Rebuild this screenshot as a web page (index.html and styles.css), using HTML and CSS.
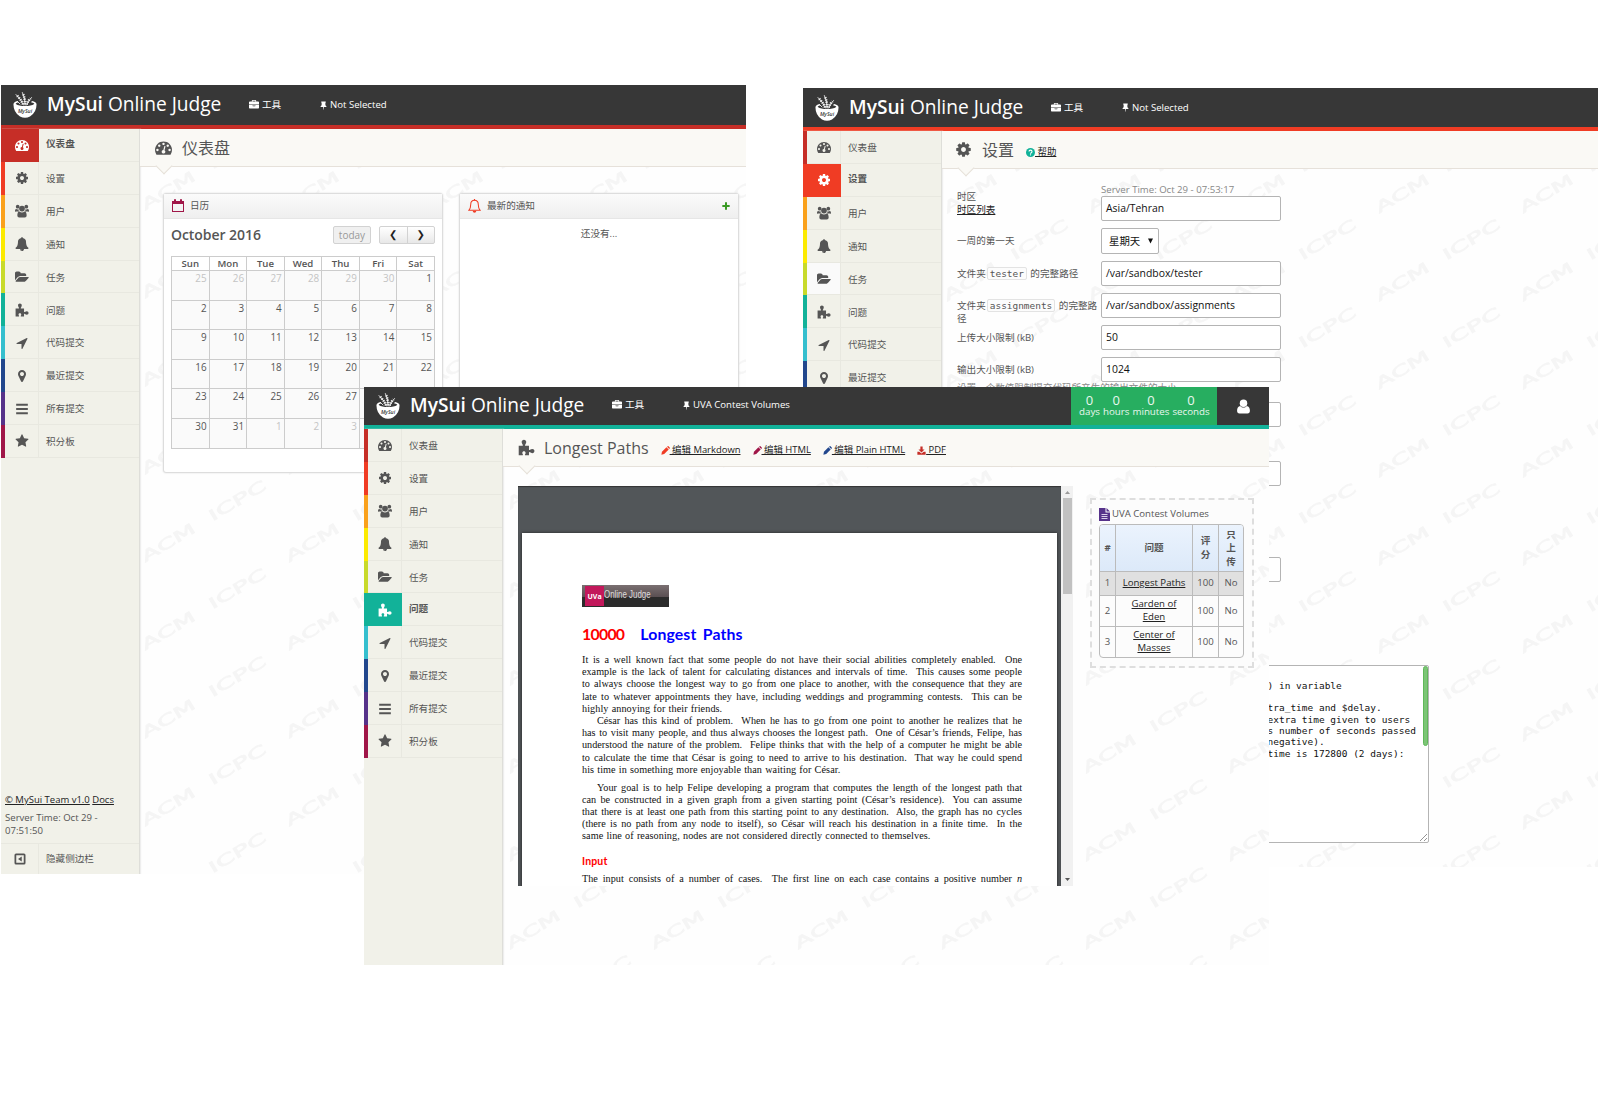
FILE: index.html
```html
<!DOCTYPE html>
<html lang="zh-CN">
<head>
<meta charset="utf-8">
<title>MySui Online Judge</title>
<link rel="stylesheet" href="styles.css">
</head>
<body>
<svg class="sprite" aria-hidden="true">
  <symbol id="dash" viewBox="0 0 1792 1792"><path d="M384 1152q0-53-37.5-90.5t-90.5-37.5-90.5 37.5-37.5 90.5 37.5 90.5 90.5 37.5 90.5-37.5 37.5-90.5zm192-448q0-53-37.5-90.5t-90.5-37.5-90.5 37.5-37.5 90.5 37.5 90.5 90.5 37.5 90.5-37.5 37.5-90.5zm428 481l101-382q6-26-7.5-48.5t-38.5-29.5-48 6.5-30 39.5l-101 382q-60 5-107 43.5t-63 98.5q-20 77 20 146t117 89 146-20 89-117q16-60-6-117t-72-91zm660-33q0-53-37.5-90.5t-90.5-37.5-90.5 37.5-37.5 90.5 37.5 90.5 90.5 37.5 90.5-37.5 37.5-90.5zm-640-640q0-53-37.5-90.5t-90.5-37.5-90.5 37.5-37.5 90.5 37.5 90.5 90.5 37.5 90.5-37.5 37.5-90.5zm448 192q0-53-37.5-90.5t-90.5-37.5-90.5 37.5-37.5 90.5 37.5 90.5 90.5 37.5 90.5-37.5 37.5-90.5zm320 448q0 261-141 483-19 29-54 29h-1402q-35 0-54-29-141-221-141-483 0-182 71-348t191-286 286-191 348-71 348 71 286 191 191 286 71 348z"/></symbol>
  <symbol id="cog" viewBox="0 0 1792 1792"><path d="M1152 896q0-106-75-181t-181-75-181 75-75 181 75 181 181 75 181-75 75-181zm512-109v222q0 12-8 23t-20 13l-185 28q-19 54-39 91 35 50 107 138 10 12 10 25t-9 23q-27 37-99 108t-94 71q-12 0-26-9l-138-108q-44 23-91 38-16 136-29 186-7 28-36 28h-222q-14 0-24.5-8.5t-11.5-21.5l-28-184q-49-16-90-37l-141 107q-10 9-25 9-14 0-25-11-126-114-165-168-7-10-7-23 0-12 8-23 15-21 51-66.5t54-70.5q-27-50-41-99l-183-27q-13-2-21-12.5t-8-23.5v-222q0-12 8-23t19-13l186-28q14-46 39-92-40-57-107-138-10-12-10-24 0-10 9-23 26-36 98.5-107.5t94.5-71.5q13 0 26 10l138 107q44-23 91-38 16-136 29-186 7-28 36-28h222q14 0 24.5 8.5t11.5 21.5l28 184q49 16 90 37l142-107q9-9 24-9 13 0 25 10 129 119 165 170 7 8 7 22 0 12-8 23-15 21-51 66.5t-54 70.5q26 50 41 98l183 28q13 2 21 12.5t8 23.5z"/></symbol>
  <symbol id="users" viewBox="0 0 24 24"><circle cx="4.6" cy="4.6" r="3.2"/><circle cx="19.4" cy="4.6" r="3.2"/><circle cx="12" cy="7.8" r="4.9"/><path d="M0 12.5C0 9.5.8 8.4 2 8.4c1 .9 3.400 1 4 .6 0 2 .5 3 1.300 4H1.800Q0 13.800 0 12.500zM24 12.500c0-3-.8-4.100-2-4.100-1 .9-3.400 1-4 .6 0 2-.5 3-1.300 4h5.500Q24 13.800 24 12.500zM4 19.800C4 15.500 5.200 12.800 7.600 12.800q2 1.700 4.400 1.700t4.400-1.700c2.400 0 3.600 2.700 3.600 7Q20 23 16.800 23H7.200Q4 23 4 19.800z"/></symbol>
  <symbol id="bell" viewBox="0 0 1792 1792"><path d="M912 1696q0-16-16-16-59 0-101.500-42.500t-42.500-101.500q0-16-16-16t-16 16q0 73 51.500 124.500t124.500 51.500q16 0 16-16zm816-288q0 52-38 90t-90 38h-448q0 106-75 181t-181 75-181-75-75-181h-448q-52 0-90-38t-38-90q50-42 91-88t85-119.500 74.500-158.500 50-206 19.500-260q0-152 117-282.500t307-158.500q-8-19-8-39 0-40 28-68t68-28 68 28 28 68q0 20-8 39 190 28 307 158.500t117 282.500q0 139 19.500 260t50 206 74.500 158.500 85 119.500 91 88z"/></symbol>
  <symbol id="folder" viewBox="0 0 1920 1792"><path d="M1879 952q0 31-31 66l-336 396q-43 51-120.500 86.500t-143.500 35.500h-1088q-34 0-60.500-13t-26.500-43q0-31 31-66l336-396q43-51 120.500-86.500t143.500-35.500h1088q34 0 60.500 13t26.500 43zm-343-344v160h-832q-94 0-197 47.500t-164 119.500l-337 396-5 6q0-4-.5-12.500t-.5-12.500v-960q0-92 66-158t158-66h320q92 0 158 66t66 158v32h544q92 0 158 66t66 158z"/></symbol>
  <symbol id="puzzle" viewBox="0 0 24 24"><path d="M1 9.500h5.400q.8-.3.300-1.500C5.800 6.500 5.200 5.600 5.200 4.200 5.200 2.300 6.600 1 8.400 1s3.200 1.300 3.200 3.200c0 1.400-.6 2.300-1.500 3.800-.5 1.200 0 1.500.8 1.500h4.600v5.200c.1 1 .8 1 1.500.6 1-.6 1.900-1.300 3.200-1.300 1.900 0 3 1.300 3 3s-1.100 3-3 3c-1.300 0-2.200-.7-3.200-1.300-.7-.4-1.400-.4-1.500.6V23h-4.800c-.8 0-1.200-.5-.8-1.200.5-.9.8-1.300.8-2.200 0-1.400-1-2.200-2.300-2.200s-2.300.8-2.300 2.200c0 .9.300 1.300.8 2.200.4.7 0 1.200-.8 1.200H1z"/></symbol>
  <symbol id="arrow" viewBox="0 0 1792 1792"><path d="M1593 349l-640 1280q-17 35-57 35-5 0-15-2-22-5-35.500-22.500t-13.500-39.500v-576h-576q-22 0-39.500-13.500t-22.500-35.500 4-42 29-30l1280-640q13-7 29-7 27 0 45 19 15 14 18.500 34.500t-6.500 39.500z"/></symbol>
  <symbol id="pin" viewBox="0 0 1792 1792"><path d="M1152 640q0-106-75-181t-181-75-181 75-75 181 75 181 181 75 181-75 75-181zm256 0q0 109-33 179l-364 774q-16 33-47.500 52t-67.500 19-67.500-19-46.500-52l-365-774q-33-70-33-179 0-212 150-362t362-150 362 150 150 362z"/></symbol>
  <symbol id="bars" viewBox="0 0 24 24"><path d="M2 3.200h20v3.400H2zM2 10.300h20v3.400H2zM2 17.400h20v3.400H2z"/></symbol>
  <symbol id="star" viewBox="0 0 1792 1792"><path d="M1728 647q0 22-26 48l-363 354 86 500q1 7 1 20 0 21-10.500 35.500t-30.500 14.500q-19 0-40-12l-449-236-449 236q-22 12-40 12-21 0-31.500-14.500t-10.500-35.500q0-6 2-20l86-500-364-354q-25-27-25-48 0-37 56-46l502-73 225-455q19-41 49-41t49 41l225 455 502 73q56 9 56 46z"/></symbol>
  <symbol id="case" viewBox="0 0 1792 1792"><path d="M640 256h512v-128h-512v128zm1152 640v480q0 66-47 113t-113 47h-1472q-66 0-113-47t-47-113v-480h672v160q0 26 19 45t45 19h320q26 0 45-19t19-45v-160h672zm-768 0v128h-256v-128h256zm768-480v384h-1792v-384q0-66 47-113t113-47h352v-160q0-40 28-68t68-28h576q40 0 68 28t28 68v160h352q66 0 113 47t47 113z"/></symbol>
  <symbol id="tack" viewBox="0 0 16 24"><path d="M3 1h10q1.500 0 1.500 1.500T13 4v7q3 1.500 3 5H9.200L8.400 23h-.8L7 16H0q0-3.500 3-5V4Q1.500 4 1.500 2.500T3 1z"/></symbol>
  <symbol id="pencil" viewBox="0 0 24 24"><path d="M1 23l1.500-7.500L14.500 3.500l6 6L8.500 21.500zM16 2l2-1.500q1-.7 2 .3l3.200 3.200q1 1 .3 2L22 8z"/></symbol>
  <symbol id="download" viewBox="0 0 24 24"><path d="M9 1h6v8h5l-8 8-8-8h5zM1 15h5l6 5 6-5h5v8H1z"/></symbol>
  <symbol id="user" viewBox="0 0 24 28"><circle cx="12" cy="8" r="7"/><path d="M0 22c0-5 2-9 6-9 1.500 1.800 3.700 3 6 3s4.500-1.200 6-3c4 0 6 4 6 9 0 3-1.500 5-4.500 5h-15C1.500 27 0 25 0 22z"/></symbol>
  <symbol id="file" viewBox="0 0 22 26"><path d="M0 0h13v9h9v17H0zM15 0l7 7h-7z"/><path class="cut" d="M5 12h12v2H5zM5 16h12v2H5zM5 20h12v1.800H5z"/></symbol>
  <symbol id="bowl" viewBox="0 0 24 26">
    <path d="M.5 12Q.8 9.800 4.500 9l1 1.200Q2.300 11 2.800 12q3 2 9.200 2t9.200-2q.5-1-3.200-1.800l1-1.200q4.200.8 4.500 3 .3 8-6.500 12.500-5 2.400-10 0Q.2 20 .5 12z"/>
    <g fill="none" stroke="currentColor" stroke-linecap="round">
      <path stroke-width="2.600" stroke-dasharray="1.300 1" stroke-linecap="butt" d="M10 12.500Q8 7.500 4 3.600M12 12.500Q12 6 9.800 1.200M13.500 12.500Q14.500 9.500 17.500 6.500" opacity=".85"/>
      <path stroke-width=".8" d="M10.500 13Q8 7 3 2.500M12.200 13Q12 5 9.400 0.500M13.800 13Q15 9 18.500 5.500M7 12L4.500 9.500"/>
    </g>
    <text x="12" y="20.500" text-anchor="middle">MySui</text>
  </symbol>
</svg>

<section class="win w1">
  <header class="top">
    <svg class="logo"><use href="#bowl"/></svg><h1><b>MySui</b> Online Judge</h1>
    <span class="tools"><svg><use href="#case"/></svg>工具</span>
    <span class="sel"><svg><use href="#tack"/></svg>Not Selected</span>
  </header>
  <div class="body">
    <nav class="side">
      <a class="c1 on"><i><svg><use href="#dash"/></svg></i><span>仪表盘</span></a>
      <a class="c2"><i><svg><use href="#cog"/></svg></i><span>设置</span></a>
      <a class="c3"><i><svg><use href="#users"/></svg></i><span>用户</span></a>
      <a class="c4"><i><svg><use href="#bell"/></svg></i><span>通知</span></a>
      <a class="c5"><i><svg><use href="#folder"/></svg></i><span>任务</span></a>
      <a class="c6"><i><svg><use href="#puzzle"/></svg></i><span>问题</span></a>
      <a class="c7"><i><svg><use href="#arrow"/></svg></i><span>代码提交</span></a>
      <a class="c8"><i><svg><use href="#pin"/></svg></i><span>最近提交</span></a>
      <a class="c9"><i><svg><use href="#bars"/></svg></i><span>所有提交</span></a>
      <a class="c10"><i><svg><use href="#star"/></svg></i><span>积分板</span></a>
      <div class="foot">
        <p><u>© MySui Team v1.0</u> <u>Docs</u></p>
        <p class="clock">Server Time: Oct 29 -<br>07:51:50</p>
        <div class="hide"><i><svg viewBox="0 0 24 24"><path fill-rule="evenodd" d="M4 1h16q3 0 3 3v16q0 3-3 3H4q-3 0-3-3V4q0-3 3-3zm.5 3.500v15h15v-15zM15.500 7v10L8 12z"/></svg></i><span>隐藏侧边栏</span></div>
      </div>
    </nav>
    <main>
      <div class="title"><svg><use href="#dash"/></svg><h2>仪表盘</h2></div>
      <div class="cards">
        <div class="card">
          <div class="chead"><svg class="cal" viewBox="0 0 24 26"><path fill-rule="evenodd" d="M0 4h4V1q2-2 4 0v3h8V1q2-2 4 0v3h4v22H0zm2 6v14h20V10z"/></svg>日历</div>
          <div class="cbar"><strong>October 2016</strong><span class="today">today</span><span class="pn"><span>❮</span><span>❯</span></span></div>
          <table class="month">
            <tr><th>Sun</th><th>Mon</th><th>Tue</th><th>Wed</th><th>Thu</th><th>Fri</th><th>Sat</th></tr>
            <tr><td class="o">25</td><td class="o">26</td><td class="o">27</td><td class="o">28</td><td class="o">29</td><td class="o">30</td><td>1</td></tr>
            <tr><td>2</td><td>3</td><td>4</td><td>5</td><td>6</td><td>7</td><td>8</td></tr>
            <tr><td>9</td><td>10</td><td>11</td><td>12</td><td>13</td><td>14</td><td>15</td></tr>
            <tr><td>16</td><td>17</td><td>18</td><td>19</td><td>20</td><td>21</td><td>22</td></tr>
            <tr><td>23</td><td>24</td><td>25</td><td>26</td><td>27</td><td></td><td></td></tr>
            <tr><td>30</td><td>31</td><td class="o">1</td><td class="o">2</td><td class="o">3</td><td></td><td></td></tr>
          </table>
        </div>
        <div class="card">
          <div class="chead"><svg class="ring" viewBox="0 0 24 26"><path d="M12 2.500c-4.500 0-7 3-7 7.500 0 6-1.500 8.500-3.500 11h21c-2-2.500-3.500-5-3.500-11 0-4.500-2.500-7.500-7-7.500z" fill="none" stroke="currentColor" stroke-width="1.900"/><path d="M11 0h2v3h-2zM8.500 22h7q-.5 3.500-3.500 3.500T8.500 22z"/></svg>最新的通知<svg class="plus" viewBox="0 0 24 24"><path d="M9 1h6v8h8v6h-8v8H9v-8H1V9h8z"/></svg></div>
          <p class="none">还没有...</p>
        </div>
      </div>
    </main>
  </div>
</section>

<section class="win w2">
  <header class="top">
    <svg class="logo"><use href="#bowl"/></svg><h1><b>MySui</b> Online Judge</h1>
    <span class="tools"><svg><use href="#case"/></svg>工具</span>
    <span class="sel"><svg><use href="#tack"/></svg>Not Selected</span>
  </header>
  <div class="body">
    <nav class="side">
      <a class="c1"><i><svg><use href="#dash"/></svg></i><span>仪表盘</span></a>
      <a class="c2 on"><i><svg><use href="#cog"/></svg></i><span>设置</span></a>
      <a class="c3"><i><svg><use href="#users"/></svg></i><span>用户</span></a>
      <a class="c4"><i><svg><use href="#bell"/></svg></i><span>通知</span></a>
      <a class="c5 hover"><i><svg><use href="#folder"/></svg></i><span>任务</span></a>
      <a class="c6"><i><svg><use href="#puzzle"/></svg></i><span>问题</span></a>
      <a class="c7"><i><svg><use href="#arrow"/></svg></i><span>代码提交</span></a>
      <a class="c8"><i><svg><use href="#pin"/></svg></i><span>最近提交</span></a>
    </nav>
    <main>
      <div class="title"><svg><use href="#cog"/></svg><h2>设置</h2><span class="link help"><svg viewBox="0 0 24 24"><circle cx="12" cy="12" r="12"/><path d="M8 9.500Q8 5.800 12 5.800t4 3.400q0 2-2 3.200t-2 2.800" fill="none" stroke="#fff" stroke-width="3"/><path d="M10.500 16.800h3v3h-3z" fill="#fff"/></svg><u>&nbsp;帮助</u></span></div>
      <div class="form">
        <label class="two">时区<br><u>时区列表</u></label><div class="first"><small>Server Time: Oct 29 - 07:53:17</small><span class="in">Asia/Tehran</span></div>
        <label>一周的第一天</label><span class="pick">星期天<svg viewBox="0 0 10 10"><path d="M0 0h10L5 10z"/></svg></span>
        <label>文件夹<code>tester</code> 的完整路径</label><span class="in">/var/sandbox/tester</span>
        <label>文件夹<code>assignments</code> 的完整路径</label><span class="in">/var/sandbox/assignments</span>
        <label>上传大小限制 (kB)</label><span class="in">50</span>
        <label>输出大小限制 (kB)<small>设置一个数值限制提交代码所产生的输出文件的大小</small></label><span class="in">1024</span>
        <label></label><span class="in"></span>
        <label></label><span class="in"></span>
        <label></label><span class="in"></span>
        <label></label><div class="area"><pre>/*
 * Put coefficient (from 100) in variable
$coefficient.
 * You can use variables $extra_time and $delay.
 * $extra_time is the total extra time given to users
 * (in seconds) and $delay is number of seconds passed
 * from finish time (can be negative).
 *  In this example, $extra_time is 172800 (2 days):</pre><b class="bar"></b><svg class="grip" viewBox="0 0 7 7"><path d="M0 7L7 0M4 7l3-3" stroke="#888" stroke-width=".9"/></svg></div>
      </div>
    </main>
  </div>
</section>

<section class="win w3">
  <header class="top">
    <svg class="logo"><use href="#bowl"/></svg><h1><b>MySui</b> Online Judge</h1>
    <span class="tools"><svg><use href="#case"/></svg>工具</span>
    <span class="sel"><svg><use href="#tack"/></svg>UVA Contest Volumes</span>
    <div class="timer"><span><b>0</b>days</span><span><b>0</b>hours</span><span><b>0</b>minutes</span><span><b>0</b>seconds</span></div>
    <div class="me"><svg><use href="#user"/></svg></div>
  </header>
  <div class="body">
    <nav class="side">
      <a class="c1"><i><svg><use href="#dash"/></svg></i><span>仪表盘</span></a>
      <a class="c2"><i><svg><use href="#cog"/></svg></i><span>设置</span></a>
      <a class="c3"><i><svg><use href="#users"/></svg></i><span>用户</span></a>
      <a class="c4"><i><svg><use href="#bell"/></svg></i><span>通知</span></a>
      <a class="c5"><i><svg><use href="#folder"/></svg></i><span>任务</span></a>
      <a class="c6 on"><i><svg><use href="#puzzle"/></svg></i><span>问题</span></a>
      <a class="c7"><i><svg><use href="#arrow"/></svg></i><span>代码提交</span></a>
      <a class="c8"><i><svg><use href="#pin"/></svg></i><span>最近提交</span></a>
      <a class="c9"><i><svg><use href="#bars"/></svg></i><span>所有提交</span></a>
      <a class="c10"><i><svg><use href="#star"/></svg></i><span>积分板</span></a>
    </nav>
    <main>
      <div class="title"><svg><use href="#puzzle"/></svg><h2>Longest Paths</h2>
        <span class="link red"><svg><use href="#pencil"/></svg><u>&nbsp;编辑 Markdown</u></span>
        <span class="link wine"><svg><use href="#pencil"/></svg><u>&nbsp;编辑 HTML</u></span>
        <span class="link blue"><svg><use href="#pencil"/></svg><u>&nbsp;编辑 Plain HTML</u></span>
        <span class="link pdf"><svg><use href="#download"/></svg><u>&nbsp;PDF</u></span>
      </div>
      <div class="split">
        <div class="viewer">
          <div class="canvas"><article class="sheet">
            <div class="uva"><b>UVa</b><span>Online Judge</span></div>
            <h3><em>10000</em>Longest Paths</h3>
            <p>It is a well known fact that some people do not have their social abilities completely enabled.&nbsp; One</p>
            <p>example is the lack of talent for calculating distances and intervals of time.&nbsp; This causes some people</p>
            <p>to always choose the longest way to go from one place to another, with the consequence that they are</p>
            <p>late to whatever appointments they have, including weddings and programming contests.&nbsp; This can be</p>
            <p class="end">highly annoying for their friends.</p>
            <p class="ind">César has this kind of problem.&nbsp; When he has to go from one point to another he realizes that he</p>
            <p>has to visit many people, and thus always chooses the longest path.&nbsp; One of César’s friends, Felipe, has</p>
            <p>understood the nature of the problem.&nbsp; Felipe thinks that with the help of a computer he might be able</p>
            <p>to calculate the time that César is going to need to arrive to his destination.&nbsp; That way he could spend</p>
            <p class="end">his time in something more enjoyable than waiting for César.</p>
            <p class="ind gap">Your goal is to help Felipe developing a program that computes the length of the longest path that</p>
            <p>can be constructed in a given graph from a given starting point (César’s residence).&nbsp; You can assume</p>
            <p>that there is at least one path from this starting point to any destination.&nbsp; Also, the graph has no cycles</p>
            <p>(there is no path from any node to itself), so César will reach his destination in a finite time.&nbsp; In the</p>
            <p class="end">same line of reasoning, nodes are not considered directly connected to themselves.</p>
            <h4>Input</h4>
            <p>The input consists of a number of cases.&nbsp; The first line on each case contains a positive number <em>n</em></p>
          </article></div>
          <div class="scroll"><svg viewBox="0 0 10 6"><path d="M5 0l5 6H0z"/></svg><b></b><svg class="dn" viewBox="0 0 10 6"><path d="M0 0h10L5 6z"/></svg></div>
        </div>
        <aside class="vol">
          <div class="vt"><svg><use href="#file"/></svg>UVA Contest Volumes</div>
          <table>
            <tr><th>#</th><th>问题</th><th>评<br>分</th><th>只<br>上<br>传</th></tr>
            <tr class="cur"><td>1</td><td><u>Longest Paths</u></td><td>100</td><td>No</td></tr>
            <tr><td>2</td><td><u>Garden of</u><br><u>Eden</u></td><td>100</td><td>No</td></tr>
            <tr><td>3</td><td><u>Center of</u><br><u>Masses</u></td><td>100</td><td>No</td></tr>
          </table>
        </aside>
      </div>
    </main>
  </div>
</section>
</body>
</html>
```
FILE: styles.css
```css
* { box-sizing: border-box; }
body {
  margin: 0;
  position: relative;
  width: 1600px;
  height: 1120px;
  overflow: hidden;
  background: #fff;
  color: #555;
  font: 9.6px/12.8px "Open Sans", "Noto Sans CJK SC", sans-serif;
}
h1, h2, h3, h4, p, pre { margin: 0; font-weight: 400; }
svg { fill: currentColor; flex: none; display: block; }
.sprite { position: absolute; width: 0; height: 0; }
i { font-style: normal; }
u { text-underline-offset: 1px; color: #222; }

/* windows on the canvas */
.win {
  position: absolute;
  display: flex;
  flex-direction: column;
  overflow: hidden;
  background-color: #fefefe;
  background-image: url("data:image/svg+xml,%3Csvg xmlns='http://www.w3.org/2000/svg' width='144' height='88'%3E%3Cg font-family='DejaVu Sans' font-size='15' fill='%23f5f5f5' stroke='%23f5f5f5' stroke-width='.7'%3E%3Ctext transform='translate(41 50) rotate(-31)' x='-30' textLength='60' lengthAdjust='spacingAndGlyphs'%3EACM%3C/text%3E%3Ctext transform='translate(110 8) rotate(-31)' x='-32' textLength='64' lengthAdjust='spacingAndGlyphs'%3EICPC%3C/text%3E%3Ctext transform='translate(110 96) rotate(-31)' x='-32' textLength='64' lengthAdjust='spacingAndGlyphs'%3EICPC%3C/text%3E%3C/g%3E%3C/svg%3E");
}
.w1 { left: 1px; top: 85px; width: 745px; height: 789px; background-position: 129px 60px; --accent: #c62e27; --bar: 44px; }
.w2 { left: 803px; top: 88px; width: 795px; height: 779px; background-position: 129px 60px; --accent: #f03c24; --bar: 43px; }
.w3 { left: 364px; top: 387px; width: 905px; height: 578px; background-position: 131px 57px; --accent: #12b299; --bar: 42px; }

.top {
  flex: none;
  height: var(--bar);
  display: flex;
  align-items: center;
  padding-left: 12px;
  background: #373737;
  border-bottom: 4px solid var(--accent);
  color: #fff;
}
.logo { width: 24px; height: 26px; margin-right: 10px; }
#bowl text { font: italic 600 5.2px "Open Sans", sans-serif; fill: #373737; }
h1 { font-size: 19.15px; line-height: 26px; width: 202px; padding-bottom: 2px; white-space: nowrap; }
h1 b { font-weight: 600; }
.tools { display: flex; align-items: center; gap: 3px; width: 71px; padding-top: 1px; }
.tools svg { width: 10px; height: 10px; }
.sel { display: flex; align-items: center; gap: 3px; flex: 1; white-space: nowrap; padding-top: 1px; }
.sel svg { width: 7px; height: 9px; }
.w3 .tools, .w3 .sel { padding-top: 0; padding-bottom: 1px; }
.timer {
  align-self: stretch;
  display: flex;
  gap: 3px;
  width: 146px;
  padding: 7px 0 0 8px;
  background: #27ae60;
  font-size: 9.75px;
  line-height: 11px;
  color: #e9f7ef;
}
.timer span { text-align: center; }
.timer b { display: block; font-weight: 400; font-size: 13px; line-height: 12px; }
.me { width: 52px; display: flex; justify-content: center; }
.me svg { width: 13px; height: 15px; }

.body { flex: 1; display: flex; min-height: 0; }
.side {
  flex: none;
  width: 139px;
  display: flex;
  flex-direction: column;
  background: #f1f1e9;
  border-right: 1px solid #deded9;
  box-shadow: 1px 0 1px #eee;
}
.side a { flex: none; height: 32.9px; display: flex; border-left: 4px solid var(--c); }
.side i { width: 34px; display: flex; align-items: center; justify-content: center; padding-top: 1px; border-right: 1px solid #e8e8e0; border-bottom: 1px solid #e8e8e0; }
.side i svg { width: 14px; height: 14px; }
.side span { flex: 1; display: flex; align-items: center; padding: 3px 0 0 7px; border-bottom: 1px solid #e8e8e0; }
.side .on i { background: var(--c); color: #fff; border-color: var(--c); }
.side .on span { font-weight: 700; padding-top: 0; padding-bottom: 1px; }
.side .hover i { background: #fafafa; }
.c1 { --c: #c62e27; } .c2 { --c: #f03c24; } .c3 { --c: #faa11b; } .c4 { --c: #fcea00; } .c5 { --c: #c8da2b; }
.c6 { --c: #12b299; } .c7 { --c: #35bfce; } .c8 { --c: #22478d; } .c9 { --c: #56328a; } .c10 { --c: #a01648; }
.foot { margin-top: auto; }
.foot p { padding-left: 4px; }
.foot p:first-child { font-size: 9.5px; }
.foot .clock { margin: 6px 0 5px; }
.hide { display: flex; height: 31px; border-top: 1px solid #e8e8e0; }
.side .hide i { width: 38px; border-bottom: 0; padding-top: 0; }
.side .hide span { border-bottom: 0; padding-top: 1px; }
.side .hide i svg { width: 12px; height: 12px; }

main { flex: 1; min-width: 0; display: flex; flex-direction: column; }
.title {
  position: relative;
  flex: none;
  height: 38px;
  display: flex;
  align-items: center;
  padding-left: 15px;
  background: #faf9f5;
  border-bottom: 1px solid #e6e1da;
}
.title::after {
  content: "";
  position: absolute;
  left: 18px;
  bottom: -6px;
  width: 11px;
  height: 11px;
  background: #faf9f5;
  border: solid #e6e1da;
  border-width: 0 1px 1px 0;
  transform: rotate(45deg);
}
.title > svg { width: 17px; height: 17px; margin-right: 10px; }
.w2 .title { padding-left: 13px; }
.w3 .title > svg { margin-right: 9px; }
h2 { font-size: 16px; line-height: 22px; }
.link { display: flex; align-items: center; margin: 6px 0 0 12px; white-space: nowrap; font-size: 9.45px; }
.link svg { width: 9px; height: 9px; }
.help { color: #12b299; margin-left: 12px; }
.red { color: #f03c24; } .wine { color: #a01648; } .blue { color: #22478d; } .pdf { color: #c62e27; }

/* dashboard */
.cards { display: flex; gap: 16px; padding: 26px 0 0 23px; }
.card { width: 280px; height: 280px; background: #fff; border: 1px solid #ddd; border-radius: 3px; box-shadow: 0 0 2px #ddd; }
.chead { display: flex; align-items: center; height: 25px; padding: 0 8px; border-bottom: 1px solid #e6e6e6; background: linear-gradient(#fbfbfb, #efefef); }
.cal { width: 12px; height: 13px; margin: 0 6px 2px 0; color: #a01648; }
.ring { width: 13px; height: 14px; margin: 0 6px 1px 0; color: #f03c24; }
.plus { width: 8px; height: 8px; margin-left: auto; color: #3a9a24; }
.none { text-align: center; padding-top: 9px; }
.cbar { display: flex; align-items: center; padding: 7px 7px 0; height: 25px; }
.cbar strong { font-size: 14px; font-weight: 600; flex: 1; letter-spacing: -.05px; }
.today, .pn { height: 18px; border: 1px solid #d2d2d2; border-radius: 2px; display: flex; align-items: center; }
.today { width: 38px; justify-content: center; margin-right: 8px; color: #999; background: #f0f0f0; font-size: 10px; }
.pn { width: 56px; background: linear-gradient(#fff, #e8e8e8); color: #222; font: 700 10px "DejaVu Sans", sans-serif; }
.pn span { flex: 1; text-align: center; line-height: 16px; }
.pn span + span { border-left: 1px solid #d2d2d2; }
.month { width: 264px; margin: 12px 0 0 7px; border-collapse: collapse; table-layout: fixed; }
.month th, .month td { border: 1px solid #ccc; padding: 0 2px; }
.month th { height: 14px; font-weight: 600; line-height: 13px; }
.month td { height: 29.6px; vertical-align: top; text-align: right; background: #fafafa; font-size: 9.9px; line-height: 14px; }
.month .o { color: #c4c4c4; }

/* settings */
.form {
  display: grid;
  grid-template-columns: 144px 1fr;
  grid-template-rows: 43px 33px 32px 32px 32px 44.500px 59px 96px 108px 184px;
  padding: 13px 0 0 15px;
}
.form label { padding-top: 10px; }
.form .two { padding-top: 9px; }
.form label small { display: block; font-size: 9.55px; margin-top: 5px; white-space: nowrap; color: #888; }
.form .first small { display: block; font-size: 9.6px; line-height: 11px; padding-top: 2px; color: #888; height: 13.500px; }
.form code { font: 9.45px "DejaVu Sans Mono", monospace; border: 1px solid #e3e3e3; border-radius: 2px; padding: 0 2px; background: #fcfcfc; margin: 0 1px; }
.in, .pick, .area { margin-top: 3px; border: 1px solid #b4b4b4; border-radius: 2px; background: #fff; color: #111; }
.in { display: flex; align-items: center; width: 180px; height: 25px; padding-left: 4px; font-size: 10.4px; }
.first .in { margin: 0; }
.pick { display: flex; align-items: center; width: 58px; height: 26px; padding-left: 7px; font-size: 10.4px; }
.pick svg { width: 5px; height: 6px; margin-left: 8px; }
.area { position: relative; width: 328px; height: 178px; padding: 3px 6px; }
.area pre { font: 9.47px/11.300px "DejaVu Sans Mono", monospace; }
.bar { position: absolute; right: 0; top: 0; width: 5px; height: 80px; border-radius: 3px; background: #7cc576; border: 1px solid #60b85a; }
.grip { position: absolute; right: 1px; bottom: 1px; width: 7px; height: 7px; }

/* problem */
.split { flex: 1; display: flex; align-items: flex-start; padding: 19px 0 0 15px; }
.viewer { display: flex; width: 555px; height: 400px; overflow: hidden; }
.canvas { flex: 1; height: 400px; overflow: hidden; padding: 47px 4px 0; background: #525659; box-shadow: inset 0 1px 1px #333; }
.sheet { height: 400px; background: #fff; padding: 52px 35px 0 60px; color: #111; font: 10.2px/12.200px "Liberation Serif", serif; box-shadow: 0 0 3px #222; }
.uva { display: flex; width: 87px; height: 22px; padding: 1px 0 1px 3px; background: linear-gradient(#7a6f71, #5a4f52 55%, #2b2b2b 56%); color: #ddd; }
.uva b { width: 20px; background: #c2185b; color: #fff; font: 700 7px/21px "Open Sans", sans-serif; text-align: center; }
.uva span { font: 11px/16px "Liberation Sans Narrow", "Liberation Sans", sans-serif; transform: scaleX(.72); transform-origin: 0 0; white-space: nowrap; }
h3 { font: 700 15.8px/20px Lato, sans-serif; color: #00f; margin: 17px 0 10px; white-space: nowrap; word-spacing: 2.500px; letter-spacing: .12px; }
h3 em { font-style: normal; color: #f00; margin-right: 16px; letter-spacing: -.7px; }
.sheet p { white-space: nowrap; text-align-last: justify; }
.sheet .end { text-align-last: left; letter-spacing: .08px; word-spacing: .5px; }
.sheet .ind { padding-left: 15px; }
.sheet .gap { margin-top: 5.500px; }
h4 { font: 700 10.5px/13px Lato, sans-serif; color: #f00; margin: 12.500px 0 5px; letter-spacing: .15px; }
.scroll { width: 12px; background: #f1f1f1; display: flex; flex-direction: column; align-items: center; padding: 5px 0; color: #999; }
.scroll svg { width: 5px; height: 3px; }
.scroll b { width: 9px; height: 96px; margin-top: 4px; background: #c1c1c1; }
.scroll .dn { margin-top: auto; color: #555; }
.vol { margin: 12px 0 0 17px; width: 164px; height: 170px; padding: 8px; border: 2px dashed #dedede; background: #fcfcfc; }
.vt { display: flex; align-items: center; gap: 2px; height: 13px; margin: 0 0 3px -1px; }
.vt svg { width: 11px; height: 13px; color: #56328a; }
#file .cut { fill: #d9cfe8; }
.vol table { width: 145px; height: 134px; margin-left: -1px; border: 1px solid #bbb; border-radius: 4px; border-spacing: 0; overflow: hidden; table-layout: fixed; text-align: center; }
.vol th, .vol td { padding: 0; border-left: 1px solid #bbb; border-top: 1px solid #bbb; }
.vol tr > :first-child { border-left: 0; width: 15px; }
.vol tr > :nth-child(3) { width: 26px; }
.vol tr > :nth-child(4) { width: 25px; }
.vol th { height: 46px; border-top: 0; font-weight: 700; line-height: 13.600px; background: linear-gradient(#ebf3fd, #dce9f9); }
.vol .cur td { height: 24px; background: #e0e0e0; }
.vol td { height: 31px; }
```
